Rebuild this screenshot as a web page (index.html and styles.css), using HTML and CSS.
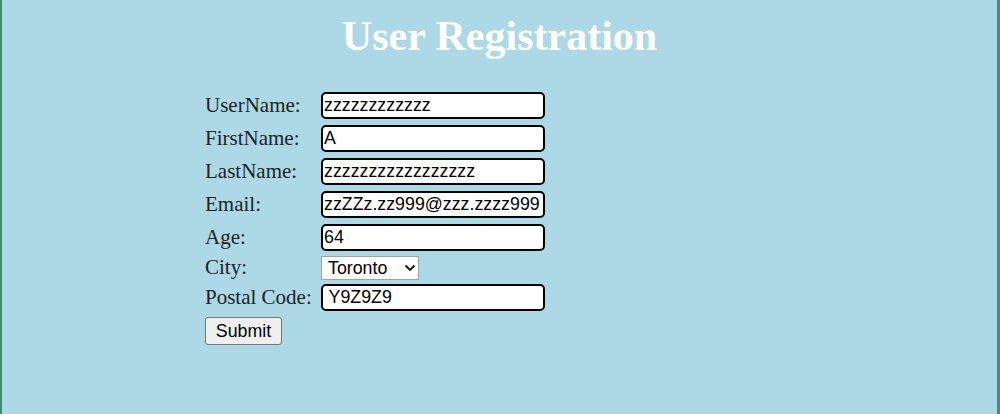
FILE: index.html
```html
<!DOCTYPE html>
<html lang="en">
<head>
    <meta charset="UTF-8">
    <meta name="viewport" content="width=device-width, initial-scale=1.0">
    <title>User Registration</title>
    <link rel="stylesheet" href="styles.css">
</head>
<body>
    <h1 class="title">User Registration</h1>

    <form class="reg-form" onsubmit="return false;">
        <label for="username">UserName:</label>
        <input type="text" id="username" class="field" value="zzzzzzzzzzzz">

        <label for="firstname">FirstName:</label>
        <input type="text" id="firstname" class="field" value="A">

        <label for="lastname">LastName:</label>
        <input type="text" id="lastname" class="field" value="zzzzzzzzzzzzzzzzz">

        <label for="email">Email:</label>
        <input type="text" id="email" class="field" value="zzZZz.zz999@zzz.zzzz999">

        <label for="age">Age:</label>
        <input type="text" id="age" class="field" value="64">

        <label for="city">City:</label>
        <div class="select-wrap">
            <select id="city" class="city">
                <option>Toronto</option>
                <option>Ottawa</option>
                <option>Montreal</option>
            </select>
            <svg class="chevron" width="12" height="8" viewBox="0 0 12 8">
                <path d="M1.5 1.5 L6 6 L10.5 1.5" fill="none" stroke="#111" stroke-width="1.8"/>
            </svg>
        </div>

        <label for="postal">Postal Code:</label>
        <input type="text" id="postal" class="field" value=" Y9Z9Z9">

        <div class="actions">
            <button type="submit" class="submit">Submit</button>
        </div>
    </form>
</body>
</html>
```

FILE: styles.css
```css
html {
    background-color: #add8e6;
}

body {
    margin: 0;
    min-height: 414px;
    box-sizing: border-box;
    border-left: 2px solid #3f8f72;
    border-right: 3px solid #3f8f72;
    font-family: "Liberation Serif", "Times New Roman", serif;
    color: #222;
}

.title {
    margin: 13px 0 0;
    font-size: 42px;
    line-height: 47px;
    font-weight: bold;
    color: #fff;
    text-align: center;
}

.reg-form {
    display: grid;
    grid-template-columns: 116px 224px;
    grid-template-rows: repeat(5, 27px) 21px 27px 28px;
    row-gap: 6px;
    align-items: center;
    margin: 32px 0 0 203px;
    font-size: 21px;
}

.reg-form label {
    white-space: nowrap;
    line-height: 21px;
}

.field {
    box-sizing: border-box;
    width: 224px;
    height: 27px;
    padding: 0 1px;
    border: 2px solid #000;
    border-radius: 5px;
    background: #fff;
    font-family: "Liberation Sans", Arial, sans-serif;
    font-size: 17.8px;
    color: #000;
}

.select-wrap {
    position: relative;
    width: 98px;
    height: 24px;
    margin-top: -1px;
}

.city {
    box-sizing: border-box;
    width: 98px;
    height: 24px;
    padding: 0 0 0 6px;
    appearance: none;
    -webkit-appearance: none;
    font-family: "Liberation Sans", Arial, sans-serif;
    font-size: 17.8px;
    color: #000;
    background: #fff;
    border: 1px solid #a3a3a3;
    border-radius: 0;
}

.chevron {
    position: absolute;
    left: 83px;
    top: 9px;
    pointer-events: none;
}

.actions {
    grid-column: 1 / 3;
    height: 28px;
}

.submit {
    box-sizing: border-box;
    width: 77px;
    height: 28px;
    padding: 0 8px;
    font-family: "Liberation Sans", Arial, sans-serif;
    font-size: 17.8px;
    color: #000;
    background-color: #efefef;
    border: 1px solid #767676;
    border-radius: 3px;
}
```
